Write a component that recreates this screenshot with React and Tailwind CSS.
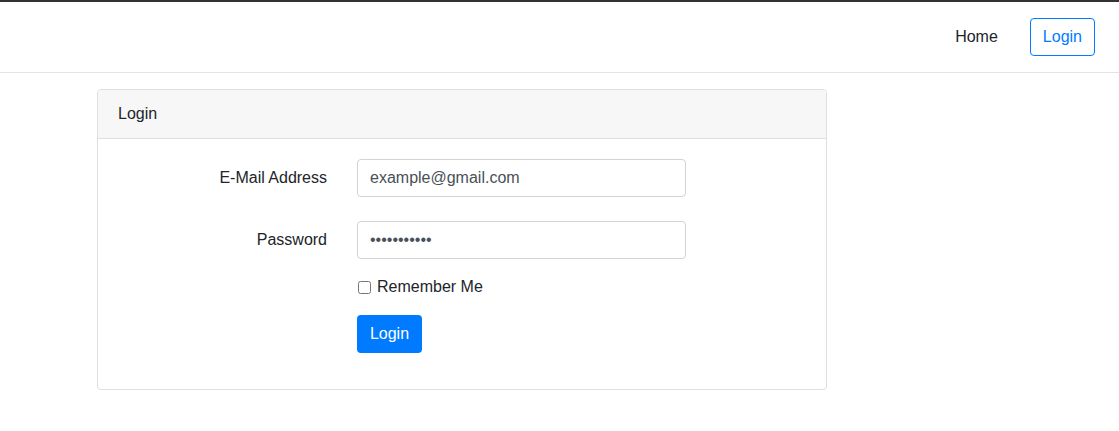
export default function App() {
  return (
    <div className="min-h-[431px] bg-white font-['Liberation_Sans',Arial,sans-serif] text-[16px] text-[#212529] border-t-2 border-[#333333]">
      <nav className="h-[71px] border-b border-[#e3e3e3] flex items-center justify-end pr-[24px]">
        <a href="#" className="px-2 text-[#212529] leading-6 mr-[24px]">Home</a>
        <a href="#" className="h-[38px] px-[12px] flex items-center border border-[#007bff] rounded-[4px] text-[#007bff]">Login</a>
      </nav>

      <div className="ml-[97px] mt-[16px] w-[730px] border border-[#dfdfdf] rounded-[4px] overflow-hidden">
        <div className="h-[49px] bg-[#f7f7f7] border-b border-[#dfdfdf] px-[20px] flex items-center">Login</div>
        <div className="px-[5px] pt-[20px] pb-[36px]">
          <div className="flex items-center mb-[24px]">
            <label className="w-[224px] text-right">E-Mail Address</label>
            <div className="ml-[30px]">
              <input
                type="text"
                defaultValue="example@gmail.com"
                className="w-[329px] h-[38px] px-[12px] border border-[#ced4da] rounded-[4px] text-[#495057] outline-none"
              />
            </div>
          </div>
          <div className="flex items-center mb-[16px]">
            <label className="w-[224px] text-right">Password</label>
            <div className="ml-[30px]">
              <input
                type="password"
                defaultValue="secretpassw"
                className="w-[329px] h-[38px] px-[12px] border border-[#ced4da] rounded-[4px] text-[#495057] outline-none"
              />
            </div>
          </div>
          <div className="ml-[254px] mb-[16px] h-[24px] flex items-center">
            <input type="checkbox" className="w-[13px] h-[13px] ml-[1px] mr-[6px]" />
            <span>Remember Me</span>
          </div>
          <div className="ml-[254px]">
            <button className="h-[38px] w-[65px] bg-[#007bff] text-white rounded-[4px]">Login</button>
          </div>
        </div>
      </div>
    </div>
  );
}
